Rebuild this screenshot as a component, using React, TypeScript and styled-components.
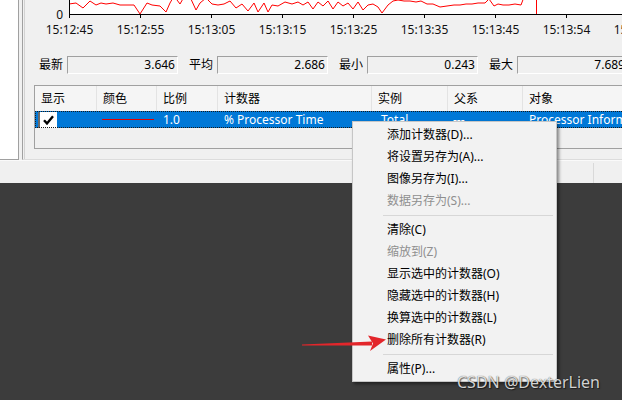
import React from 'react';
import styled, { createGlobalStyle } from 'styled-components';

const GlobalStyle = createGlobalStyle`
  html, body {
    margin: 0;
    padding: 0;
    background: #3c3c3c;
  }
  body {
    font-family: 'Noto Sans', 'Noto Sans CJK SC', sans-serif;
    font-size: 12px;
    color: #000;
  }
`;

const Page = styled.div`
  position: relative;
  width: 622px;
  height: 400px;
  overflow: hidden;
  background: #3c3c3c;
  display: flex;
  flex-direction: column;
`;

const Window = styled.div`
  display: flex;
  height: 160px;
  background: #f0f0f0;
  flex-shrink: 0;
`;

const LeftPane = styled.div`
  width: 19px;
  box-sizing: border-box;
  background: #fff;
  border-right: 1px solid #a0a0a0;
  border-bottom: 1px solid #a0a0a0;
`;

const Frame = styled.div`
  flex: 1;
  min-width: 0;
  display: flex;
  margin-left: 3px;
  padding-left: 1px;
  border-left: 1px solid #a0a0a0;
  border-bottom: 1px solid #dcdcdc;
`;

const Inner = styled.div`
  flex: 1;
  min-width: 0;
  display: flex;
  flex-direction: column;
  overflow: hidden;
  border-left: 1px solid #d2d2d2;
`;

const ChartSvg = styled.svg`
  display: block;
  flex-shrink: 0;
  overflow: hidden;
`;

const StatsRow = styled.div`
  display: flex;
  gap: 11px;
  padding: 11px 0 0 14px;
  white-space: nowrap;
`;

const StatGroup = styled.div`
  display: flex;
  align-items: center;
  gap: 4px;
  flex-shrink: 0;
`;

const StatLabel = styled.span`
  width: 24px;
  line-height: 18px;
`;

const StatBox = styled.div`
  width: 111px;
  height: 18px;
  box-sizing: border-box;
  border-top: 1px solid #a0a0a0;
  border-left: 1px solid #a0a0a0;
  border-right: 1px solid #fff;
  border-bottom: 1px solid #fff;
  padding-right: 2px;
  text-align: right;
  line-height: 16px;
`;

const ListView = styled.div`
  flex-shrink: 0;
  width: 600px;
  height: 64px;
  box-sizing: border-box;
  margin: 11px 0 0 9px;
  border: 1px solid #a0a0a0;
  border-right: none;
  background: #f0f0f0;
`;

const COLS = '62px 60px 61px 154px 76px 75px 1fr';

const HeaderRow = styled.div`
  display: grid;
  grid-template-columns: ${COLS};
  height: 25px;
  background: #f5f5f5;
`;

const HeaderCell = styled.div`
  padding-left: 6px;
  line-height: 25px;
  border-right: 1px solid #e3e3e3;
  white-space: nowrap;
  &:last-child {
    border-right: none;
  }
`;

const DataRow = styled.div`
  display: grid;
  grid-template-columns: ${COLS};
  height: 17px;
  background: #0078d7;
  color: #fff;
  outline: 1px dotted #1a1a1a;
  outline-offset: -1px;
`;

const Cell = styled.div<{ $pad?: number }>`
  display: flex;
  align-items: center;
  padding-left: ${p => (p.$pad ?? 6)}px;
  white-space: nowrap;
  overflow: hidden;
`;

const CheckBox = styled.div`
  width: 17px;
  height: 16px;
  background: #fff;
  border-left: 2px solid #6a6a6a;
  display: flex;
  align-items: center;
  justify-content: center;
`;

const ColorLine = styled.div`
  width: 52px;
  height: 1px;
  background: #e00000;
`;

const StatusBar = styled.div`
  height: 23px;
  flex-shrink: 0;
  box-sizing: border-box;
  background: #f0f0f0;
  border-top: 1px solid #fafafa;
  display: flex;
  justify-content: flex-end;
`;

const StatusPart = styled.div`
  width: 28px;
  margin-top: 2px;
  border-left: 1px solid #d9d9d9;
`;

const Menu = styled.div`
  position: absolute;
  left: 352px;
  top: 121px;
  width: 205px;
  box-sizing: border-box;
  padding: 2px 0 1px;
  background: #f2f2f2;
  border: 1px solid #c6c6c6;
  box-shadow: 2px 2px 3px rgba(0, 0, 0, 0.45);
`;

const MenuItem = styled.div<{ $disabled?: boolean }>`
  height: 22px;
  line-height: 22px;
  padding-left: 34px;
  white-space: nowrap;
  color: ${p => (p.$disabled ? '#8f8f8f' : '#000')};
`;

const MenuSep = styled.div`
  height: 1px;
  margin: 3px 3px 3px 30px;
  background: #d7d7d7;
`;

const Arrow = styled.svg`
  position: absolute;
  left: 300px;
  top: 330px;
`;

const Watermark = styled.div`
  position: absolute;
  left: 457px;
  top: 374px;
  font-size: 16px;
  line-height: 16px;
  color: rgba(255, 255, 255, 0.82);
  text-shadow: 0 0 1px rgba(0, 0, 0, 0.7), 1px 1px 1px rgba(0, 0, 0, 0.5);
  white-space: nowrap;
`;

// points in page coordinates, chart svg starts at x = 25
const DATA: [number, number][] = [
  [69, 4], [76, 3], [83, 8], [90, 1], [96, 5], [101, 3], [106, 4], [113, 3], [120, 5],
  [127, 5], [134, 5], [140, 14], [147, 3], [152, 5], [160, 6], [166, 12], [170, 3],
  [174, -4], [180, 4], [184, -3], [190, -3], [196, 10], [200, 3], [206, -2], [212, 4],
  [218, 5], [224, 4], [230, 1], [236, 8], [242, 4], [248, 11], [254, 3], [258, 12],
  [264, 3], [268, 12], [272, 5], [278, 6], [285, 2], [292, 4], [298, 2], [303, 5],
  [308, 2], [313, 9], [318, 2], [323, 6], [328, 1], [333, 9], [338, 2], [343, 6],
  [348, 3], [353, 9], [358, 2], [363, 10], [368, 5], [373, 4], [378, 7], [382, 13],
  [388, 5], [393, 1], [398, 0], [404, 1], [410, 1], [416, 2], [421, 1], [427, 4],
  [433, 4], [440, 7], [447, 6], [454, 5], [460, 5], [466, 4], [472, 4], [478, 3],
  [485, 3], [489, -1], [494, 6], [498, 4], [503, 5], [509, 5], [515, 4], [521, 5], [524, -3],
];

const TIMES = [
  '15:12:45', '15:12:55', '15:13:05', '15:13:15', '15:13:25',
  '15:13:35', '15:13:45', '15:13:54', '15:14:04',
];

const STATS = [
  { label: '最新', value: '3.646' },
  { label: '平均', value: '2.686' },
  { label: '最小', value: '0.243' },
  { label: '最大', value: '7.689' },
];

const HEADERS = ['显示', '颜色', '比例', '计数器', '实例', '父系', '对象'];

type Entry = { text?: string; disabled?: boolean; sep?: boolean };

const MENU: Entry[] = [
  { text: '添加计数器(D)...' },
  { text: '将设置另存为(A)...' },
  { text: '图像另存为(I)...' },
  { text: '数据另存为(S)...', disabled: true },
  { sep: true },
  { text: '清除(C)' },
  { text: '缩放到(Z)', disabled: true },
  { text: '显示选中的计数器(O)' },
  { text: '隐藏选中的计数器(H)' },
  { text: '换算选中的计数器(L)' },
  { text: '删除所有计数器(R)' },
  { sep: true },
  { text: '属性(P)...' },
];

function Chart() {
  const ox = 25;
  const axisX = 69 - ox;
  const line = DATA.map(([x, y]) => `${x - ox},${y}`).join(' ');
  return (
    <ChartSvg width={597} height={45} viewBox="0 0 597 45">
      <rect x={axisX} y={0} width={597 - axisX} height={14} fill="#fff" />
      <polyline points={line} fill="none" stroke="#ff0000" strokeWidth={1} />
      <line x1={536 - ox + 0.5} y1={0} x2={536 - ox + 0.5} y2={14} stroke="#ff0000" strokeWidth={1} />
      <line x1={axisX + 0.5} y1={0} x2={axisX + 0.5} y2={15} stroke="#000" strokeWidth={1} />
      <line x1={axisX} y1={14.5} x2={597} y2={14.5} stroke="#000" strokeWidth={1} />
      <text x={axisX - 6} y={19} fontSize={12} textAnchor="end" fill="#111">0</text>
      {TIMES.map((t, i) => {
        const x = axisX + 71 * i + 0.5;
        return (
          <g key={t}>
            <line x1={x} y1={14} x2={x} y2={18} stroke="#000" strokeWidth={1} />
            <text x={x} y={34} fontSize={12} textAnchor="middle" fill="#111">{t}</text>
          </g>
        );
      })}
    </ChartSvg>
  );
}

export default function App() {
  return (
    <>
      <GlobalStyle />
      <Page>
        <Window>
          <LeftPane />
          <Frame>
            <Inner>
              <Chart />
              <StatsRow>
                {STATS.map(s => (
                  <StatGroup key={s.label}>
                    <StatLabel>{s.label}</StatLabel>
                    <StatBox>{s.value}</StatBox>
                  </StatGroup>
                ))}
              </StatsRow>
              <ListView>
                <HeaderRow>
                  {HEADERS.map(h => (
                    <HeaderCell key={h}>{h}</HeaderCell>
                  ))}
                </HeaderRow>
                <DataRow>
                  <Cell $pad={3}>
                    <CheckBox>
                      <svg width="11" height="10" viewBox="0 0 11 10">
                        <path d="M1 5.2 L4 8.4 L10 1.2" fill="none" stroke="#000" strokeWidth="2.4" />
                      </svg>
                    </CheckBox>
                  </Cell>
                  <Cell $pad={5}>
                    <ColorLine />
                  </Cell>
                  <Cell>1.0</Cell>
                  <Cell>% Processor Time</Cell>
                  <Cell $pad={9}>Total</Cell>
                  <Cell $pad={5}>---</Cell>
                  <Cell>Processor Information</Cell>
                </DataRow>
              </ListView>
            </Inner>
          </Frame>
        </Window>
        <StatusBar>
          <StatusPart />
        </StatusBar>

        <Menu>
          {MENU.map((m, i) =>
            m.sep ? (
              <MenuSep key={i} />
            ) : (
              <MenuItem key={i} $disabled={m.disabled}>
                {m.text}
              </MenuItem>
            )
          )}
        </Menu>

        <Arrow width={90} height={24} viewBox="0 0 90 24">
          <polygon points="2,14.6 72,11.6 72,15.4 2,15.4" fill="#e3262b" />
          <polygon points="68,5.5 86,9.5 70,21 73,13.5" fill="#e3262b" />
        </Arrow>

        <Watermark>CSDN @DexterLien</Watermark>
      </Page>
    </>
  );
}
